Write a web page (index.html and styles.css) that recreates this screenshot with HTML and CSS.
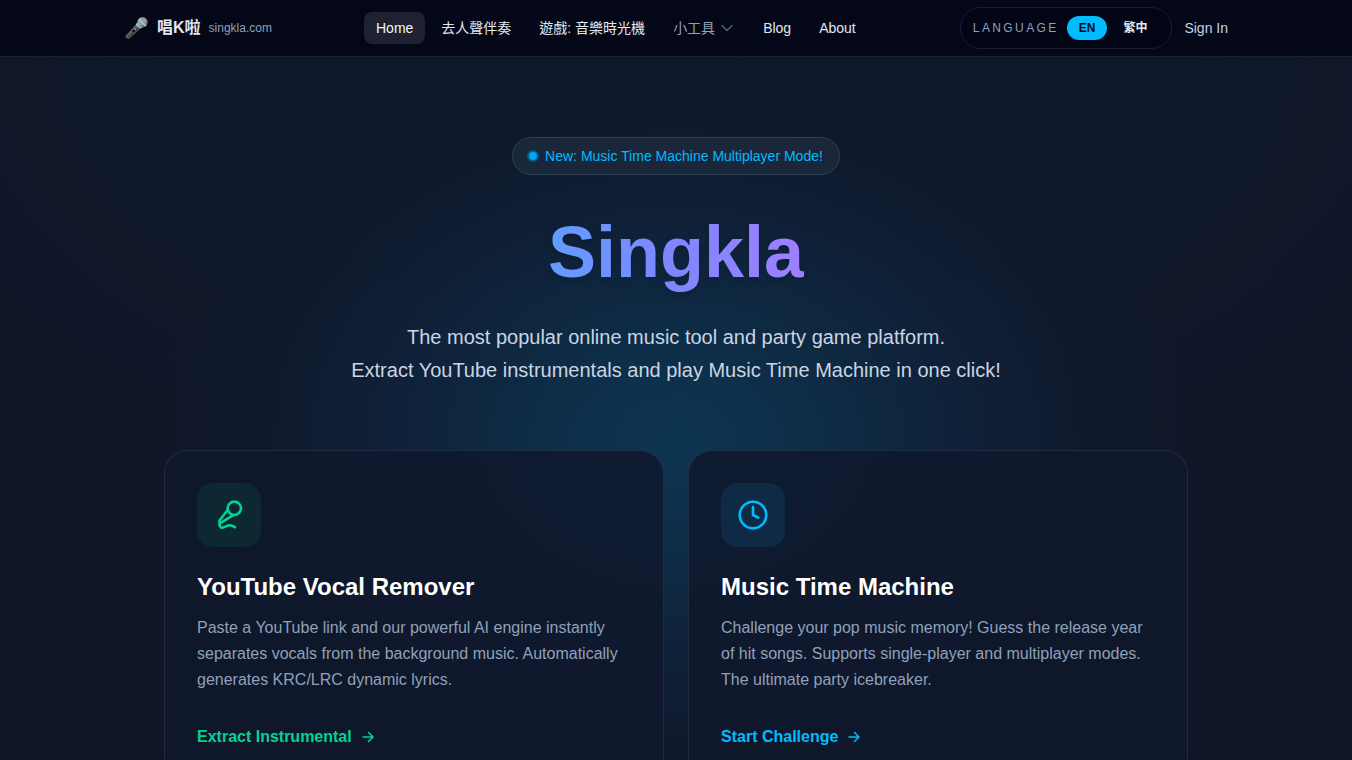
FILE: index.html
```html
<!DOCTYPE html>
<html lang="en">
<head>
  <meta charset="UTF-8" />
  <meta name="viewport" content="width=device-width, initial-scale=1.0" />
  <title>Singkla</title>
  <link rel="stylesheet" href="styles.css">
</head>
<body>
  <header class="header">
    <div class="header-inner">
      <a class="brand" href="/">
        <span class="brand-icon">🎤</span>
        <span class="brand-name">唱K啦</span>
        <span class="brand-domain">singkla.com</span>
      </a>

      <nav class="nav">
        <a class="nav-link active" href="/">Home</a>
        <a class="nav-link" href="/vocal-remover">去人聲伴奏</a>
        <a class="nav-link" href="/time-machine">遊戲: 音樂時光機</a>
        <button class="nav-link nav-menu" type="button">
          小工具
          <svg width="16" height="16" viewBox="0 0 16 16" fill="none" stroke="currentColor" stroke-width="1.4" stroke-linecap="round" stroke-linejoin="round"><path d="M3 5.500l5 5 5-5" /></svg>
        </button>
        <a class="nav-link" href="/blog">Blog</a>
        <a class="nav-link" href="/about">About</a>
      </nav>

      <div class="header-right">
        <div class="lang">
          <span class="lang-label">LANGUAGE</span>
          <div class="lang-options">
            <button class="lang-btn selected" type="button">EN</button>
            <button class="lang-btn" type="button">繁中</button>
          </div>
        </div>
        <a class="sign-in" href="/login">Sign In</a>
      </div>
    </div>
  </header>

  <main class="hero">
    <a class="badge" href="/time-machine">
      <span class="badge-dot"></span>
      New: Music Time Machine Multiplayer Mode!
    </a>
    <h1 class="title">Singkla</h1>
    <p class="lead">The most popular online music tool and party game platform.<br>Extract YouTube instrumentals and play Music Time Machine in one click!</p>

    <div class="cards">
      <article class="card green">
        <div class="card-icon">
          <svg width="32" height="32" viewBox="0 0 32 32" fill="none" stroke="currentColor" stroke-width="2.6" stroke-linecap="round" stroke-linejoin="round">
            <circle cx="21.3" cy="9.3" r="6.7" />
            <path d="M14.800 10.800L6.500 21.500v4M19.800 16.300L7 24.300" />
            <path d="M6.500 25c0 2.500 1.200 3.900 3.400 3.600 2.600-.4 4.300-2.500 7.300-2.400 2 .1 3 .9 4.800 2" />
          </svg>
        </div>
        <h2 class="card-title">YouTube Vocal Remover</h2>
        <p class="card-text">Paste a YouTube link and our powerful AI engine instantly separates vocals from the background music. Automatically generates KRC/LRC dynamic lyrics.</p>
        <a class="card-link" href="/vocal-remover">
          Extract Instrumental
          <svg width="16" height="16" viewBox="0 0 16 16" fill="none" stroke="currentColor" stroke-width="1.5" stroke-linecap="round" stroke-linejoin="round"><path d="M3 8h10M8.500 3.500L13 8l-4.500 4.500" /></svg>
        </a>
      </article>

      <article class="card blue">
        <div class="card-icon">
          <svg width="32" height="32" viewBox="0 0 32 32" fill="none" stroke="currentColor" stroke-width="2.6" stroke-linecap="round" stroke-linejoin="round">
            <circle cx="16" cy="16" r="13.3" />
            <path d="M16 8v8l5.300 2.700" />
          </svg>
        </div>
        <h2 class="card-title">Music Time Machine</h2>
        <p class="card-text">Challenge your pop music memory! Guess the release year of hit songs. Supports single-player and multiplayer modes. The ultimate party icebreaker.</p>
        <a class="card-link" href="/time-machine">
          Start Challenge
          <svg width="16" height="16" viewBox="0 0 16 16" fill="none" stroke="currentColor" stroke-width="1.5" stroke-linecap="round" stroke-linejoin="round"><path d="M3 8h10M8.500 3.500L13 8l-4.500 4.500" /></svg>
        </a>
      </article>
    </div>
  </main>
</body>
</html>
```
FILE: styles.css
```css
* {
  box-sizing: border-box;
}

body {
  margin: 0;
  font-family: "Liberation Sans", "Noto Sans CJK TC", sans-serif;
  color: #e2e8f0;
  background: #0f172b;
}

a {
  color: inherit;
  text-decoration: none;
}

button {
  border: none;
  background: none;
  font-family: inherit;
  cursor: pointer;
}

h1,
h2,
p {
  margin: 0;
}

svg {
  display: block;
  flex-shrink: 0;
}

/* Header */
.header {
  position: sticky;
  top: 0;
  z-index: 10;
  background: #030718;
  border-bottom: 1px solid #182232;
}

.header-inner {
  display: flex;
  align-items: center;
  justify-content: space-between;
  max-width: 1152px;
  height: 56px;
  margin: 0 auto;
  padding: 0 24px;
}

.brand {
  display: flex;
  align-items: center;
  gap: 8px;
}

.brand-icon {
  font-size: 20px;
  line-height: 28px;
}

.brand-name {
  font-size: 16px;
  font-weight: 700;
  line-height: 24px;
}

.brand-domain {
  font-size: 12px;
  color: #90a1b9;
}

.nav {
  display: flex;
  align-items: center;
  gap: 4px;
}

.nav-link {
  padding: 6px 12px;
  border-radius: 8px;
  font-size: 14px;
  line-height: 20px;
  white-space: nowrap;
}

.nav-link.active {
  background: #1e2131;
  color: #f1f5f9;
}

.nav-menu {
  display: flex;
  align-items: center;
  gap: 4px;
  color: #90a1b9;
}

.nav-menu svg {
  opacity: 0.6;
}

.header-right {
  display: flex;
  align-items: center;
  gap: 12px;
}

.lang {
  display: flex;
  align-items: center;
  gap: 8px;
  padding: 8px 12px;
  border: 1px solid #1b1e2d;
  border-radius: 21px;
  background: #020515;
}

.lang-label {
  font-size: 12px;
  letter-spacing: 0.2em;
  color: #90a1b9;
}

.lang-options {
  display: flex;
  gap: 4px;
}

.lang-btn {
  padding: 4px 12px;
  border-radius: 12px;
  font-size: 12px;
  font-weight: 700;
  line-height: 16px;
  color: #e2e8f0;
}

.lang-btn.selected {
  background: #00bcff;
  color: #020618;
}

.sign-in {
  font-size: 14px;
  color: #cad5e2;
}

/* Hero */
.hero {
  display: flex;
  flex-direction: column;
  align-items: center;
  padding: 80px 24px;
  background:
    radial-gradient(ellipse 520px 390px at 50% 384px, #0d3552 0%, #0d314d 15%, #0e2942 35%, #0f2037 58%, rgba(15, 27, 47, 0.7) 78%, transparent 100%),
    radial-gradient(ellipse 900px 500px at 50% 0, #0f182b 50%, #101628 100%);
}

.badge {
  display: flex;
  align-items: center;
  gap: 8px;
  padding: 8px 16px;
  border: 1px solid #2b3e50;
  border-radius: 19px;
  background: #1a263a;
  font-size: 14px;
  line-height: 20px;
  color: #00bcff;
}

.badge-dot {
  width: 8px;
  height: 8px;
  border-radius: 50%;
  background: #00a6f4;
  box-shadow: 0 0 0 2px #085980;
}

.title {
  margin: 32px 0 24px;
  font-size: 72px;
  font-weight: 700;
  line-height: 90px;
  color: transparent;
  background: linear-gradient(to right, #629cff, #7f86ff 50%, #9f7fff);
  -webkit-background-clip: text;
  background-clip: text;
  filter: drop-shadow(0 3px 3px rgba(0, 0, 0, 0.15));
}

.lead {
  font-size: 20px;
  line-height: 33px;
  text-align: center;
  color: #cad5e2;
}

/* Tool cards */
.cards {
  display: grid;
  grid-template-columns: 1fr 1fr;
  gap: 24px;
  width: 100%;
  max-width: 1024px;
  margin-top: 63px;
}

.card {
  padding: 32px;
  border: 1px solid rgba(148, 170, 200, 0.14);
  border-radius: 24px;
  background: rgba(15, 23, 43, 0.85);
}

.card-icon {
  display: flex;
  align-items: center;
  justify-content: center;
  width: 64px;
  height: 64px;
  margin-bottom: 24px;
  border-radius: 16px;
}

.card-title {
  margin-bottom: 12px;
  font-size: 24px;
  line-height: 32px;
  color: #fff;
}

.card-text {
  margin-bottom: 32px;
  font-size: 16px;
  line-height: 26px;
  color: #90a1b9;
}

.card-link {
  display: flex;
  align-items: center;
  gap: 8px;
  font-size: 16px;
  font-weight: 700;
  line-height: 24px;
}

.green .card-icon {
  background: #0e2833;
}

.green .card-icon,
.green .card-link {
  color: #00d492;
}

.blue .card-icon {
  background: #0e2a44;
}

.blue .card-icon,
.blue .card-link {
  color: #00bcff;
}

@media (max-width: 900px) {
  .cards {
    grid-template-columns: 1fr;
  }

  .nav {
    display: none;
  }
}
```
